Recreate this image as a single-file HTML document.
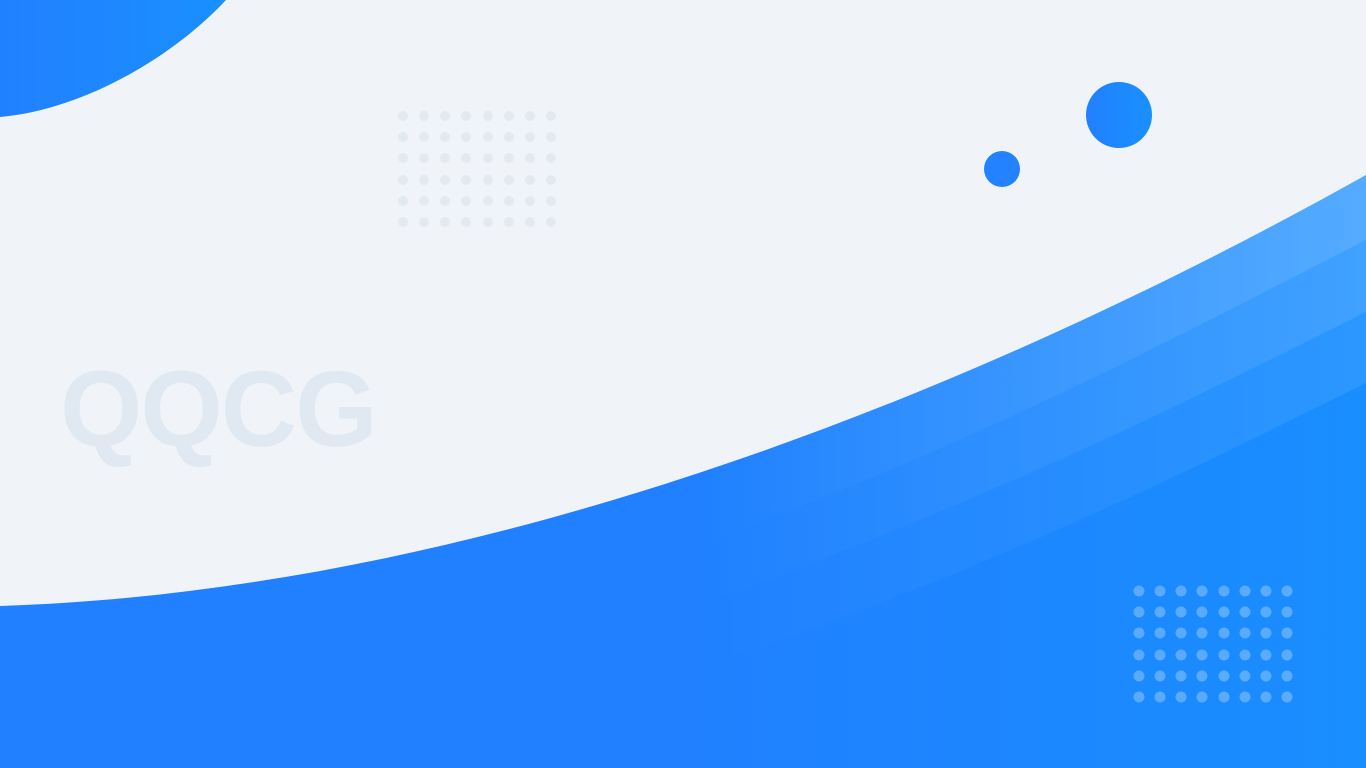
<!DOCTYPE html>
<html><head><meta charset="utf-8"><style>
html,body{margin:0;padding:0;width:1366px;height:768px;overflow:hidden;background:#f0f4f9}
svg{position:absolute;left:0;top:0}
.t{position:absolute;left:60px;top:346px;font-family:"Liberation Sans",sans-serif;font-weight:bold;font-size:108px;color:#e0e9f2;letter-spacing:-2px;transform:scaleX(0.98);transform-origin:left}
</style></head><body>
<svg width="1366" height="768" viewBox="0 0 1366 768">
<defs>
<linearGradient id="b" x1="0" x2="1" y1="0" y2="0"><stop offset="0" stop-color="#2180ff"/><stop offset="0.5" stop-color="#2080ff"/><stop offset="1" stop-color="#198eff"/></linearGradient>
<linearGradient id="w1" gradientUnits="userSpaceOnUse" x1="700" x2="1366" y1="0" y2="0"><stop offset="0" stop-color="#fff" stop-opacity="0"/><stop offset="1" stop-color="#fff" stop-opacity="0.26"/></linearGradient>
<linearGradient id="w2" gradientUnits="userSpaceOnUse" x1="700" x2="1366" y1="0" y2="0"><stop offset="0" stop-color="#fff" stop-opacity="0"/><stop offset="1" stop-color="#fff" stop-opacity="0.17"/></linearGradient>
<linearGradient id="w3" gradientUnits="userSpaceOnUse" x1="700" x2="1366" y1="0" y2="0"><stop offset="0" stop-color="#fff" stop-opacity="0"/><stop offset="1" stop-color="#fff" stop-opacity="0.08"/></linearGradient>
<linearGradient id="c" x1="0" x2="1"><stop offset="0" stop-color="#2180ff"/><stop offset="1" stop-color="#1a90ff"/></linearGradient>
</defs>
<path d="M0,0 H226 C170,60 80,110 0,117 Z" fill="url(#c)"/>
<path d="M0,606 C500,590 1000,380 1366,175 V768 H0 Z" fill="url(#b)"/>
<path d="M0,606 C500,590 1000,380 1366,175 V240 C1150,350 950,460 600,580 L0,640 Z" fill="url(#w1)"/>
<path d="M600,580 C950,460 1150,350 1366,240 V312 C1150,420 950,520 600,640 Z" fill="url(#w2)"/>
<path d="M600,640 C950,520 1150,420 1366,312 V383 C1150,490 950,590 600,700 Z" fill="url(#w3)"/>
<circle cx="1002" cy="169" r="18" fill="#2282ff"/>
<circle cx="1119" cy="115" r="33" fill="url(#c)"/>
</svg>
<div class="t">QQCG</div>
<svg width="1366" height="768" viewBox="0 0 1366 768">
<g fill="#e2e9ef">
<circle cx="403" cy="116" r="5"/><circle cx="424" cy="116" r="5"/><circle cx="445" cy="116" r="5"/><circle cx="466" cy="116" r="5"/><circle cx="488" cy="116" r="5"/><circle cx="509" cy="116" r="5"/><circle cx="530" cy="116" r="5"/><circle cx="551" cy="116" r="5"/>
<circle cx="403" cy="137" r="5"/><circle cx="424" cy="137" r="5"/><circle cx="445" cy="137" r="5"/><circle cx="466" cy="137" r="5"/><circle cx="488" cy="137" r="5"/><circle cx="509" cy="137" r="5"/><circle cx="530" cy="137" r="5"/><circle cx="551" cy="137" r="5"/>
<circle cx="403" cy="158" r="5"/><circle cx="424" cy="158" r="5"/><circle cx="445" cy="158" r="5"/><circle cx="466" cy="158" r="5"/><circle cx="488" cy="158" r="5"/><circle cx="509" cy="158" r="5"/><circle cx="530" cy="158" r="5"/><circle cx="551" cy="158" r="5"/>
<circle cx="403" cy="180" r="5"/><circle cx="424" cy="180" r="5"/><circle cx="445" cy="180" r="5"/><circle cx="466" cy="180" r="5"/><circle cx="488" cy="180" r="5"/><circle cx="509" cy="180" r="5"/><circle cx="530" cy="180" r="5"/><circle cx="551" cy="180" r="5"/>
<circle cx="403" cy="201" r="5"/><circle cx="424" cy="201" r="5"/><circle cx="445" cy="201" r="5"/><circle cx="466" cy="201" r="5"/><circle cx="488" cy="201" r="5"/><circle cx="509" cy="201" r="5"/><circle cx="530" cy="201" r="5"/><circle cx="551" cy="201" r="5"/>
<circle cx="403" cy="222" r="5"/><circle cx="424" cy="222" r="5"/><circle cx="445" cy="222" r="5"/><circle cx="466" cy="222" r="5"/><circle cx="488" cy="222" r="5"/><circle cx="509" cy="222" r="5"/><circle cx="530" cy="222" r="5"/><circle cx="551" cy="222" r="5"/>
</g>
<g fill="#ffffff" fill-opacity="0.28">
<circle cx="1139" cy="591" r="5.5"/><circle cx="1160" cy="591" r="5.5"/><circle cx="1181" cy="591" r="5.5"/><circle cx="1202" cy="591" r="5.5"/><circle cx="1224" cy="591" r="5.5"/><circle cx="1245" cy="591" r="5.5"/><circle cx="1266" cy="591" r="5.5"/><circle cx="1287" cy="591" r="5.5"/>
<circle cx="1139" cy="612" r="5.5"/><circle cx="1160" cy="612" r="5.5"/><circle cx="1181" cy="612" r="5.5"/><circle cx="1202" cy="612" r="5.5"/><circle cx="1224" cy="612" r="5.5"/><circle cx="1245" cy="612" r="5.5"/><circle cx="1266" cy="612" r="5.5"/><circle cx="1287" cy="612" r="5.5"/>
<circle cx="1139" cy="633" r="5.5"/><circle cx="1160" cy="633" r="5.5"/><circle cx="1181" cy="633" r="5.5"/><circle cx="1202" cy="633" r="5.5"/><circle cx="1224" cy="633" r="5.5"/><circle cx="1245" cy="633" r="5.5"/><circle cx="1266" cy="633" r="5.5"/><circle cx="1287" cy="633" r="5.5"/>
<circle cx="1139" cy="655" r="5.5"/><circle cx="1160" cy="655" r="5.5"/><circle cx="1181" cy="655" r="5.5"/><circle cx="1202" cy="655" r="5.5"/><circle cx="1224" cy="655" r="5.5"/><circle cx="1245" cy="655" r="5.5"/><circle cx="1266" cy="655" r="5.5"/><circle cx="1287" cy="655" r="5.5"/>
<circle cx="1139" cy="676" r="5.5"/><circle cx="1160" cy="676" r="5.5"/><circle cx="1181" cy="676" r="5.5"/><circle cx="1202" cy="676" r="5.5"/><circle cx="1224" cy="676" r="5.5"/><circle cx="1245" cy="676" r="5.5"/><circle cx="1266" cy="676" r="5.5"/><circle cx="1287" cy="676" r="5.5"/>
<circle cx="1139" cy="697" r="5.5"/><circle cx="1160" cy="697" r="5.5"/><circle cx="1181" cy="697" r="5.5"/><circle cx="1202" cy="697" r="5.5"/><circle cx="1224" cy="697" r="5.5"/><circle cx="1245" cy="697" r="5.5"/><circle cx="1266" cy="697" r="5.5"/><circle cx="1287" cy="697" r="5.5"/>
</g>
</svg>
</body></html>
